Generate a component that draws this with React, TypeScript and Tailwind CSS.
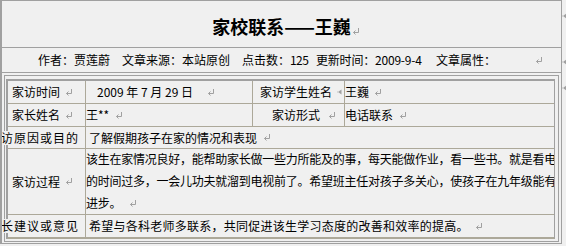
import React from 'react';

// Word-style paragraph mark
function ParaMark({ className = '' }: { className?: string }) {
  return (
    <svg width="8" height="7" viewBox="0 0 8 7" fill="none" className={`inline-block shrink-0 ${className}`}>
      <path d="M6.5 0V4.5H1.5" stroke="#a0a0a0" />
      <path d="M3.5 2.5L1.5 4.5L3.5 6.5" stroke="#a0a0a0" />
    </svg>
  );
}

// end-of-cell / end-of-row marker
function CellMark({ className = '' }: { className?: string }) {
  return (
    <svg width="5" height="6" viewBox="0 0 5 6" className={`inline-block shrink-0 ${className}`}>
      <path d="M4.5 0.5V5.5L1 3Z" fill="#a0a0a0" />
      <rect x="0" y="2.5" width="1" height="1" fill="#c0c0c0" />
    </svg>
  );
}

const cell = 'border-r border-b border-[#aca899] flex items-center whitespace-nowrap';

export default function App() {
  return (
    <div className="relative w-[566px] h-[246px] bg-[#f0f0f0] text-black font-['Noto_Sans_CJK_SC',sans-serif] text-[12px] leading-[14px]">
      <div className="w-[562px] h-[244px] border-t border-r border-b border-l-2 border-[#a0a0a0] overflow-hidden flex flex-col">
        {/* Title */}
        <div className="h-[47px] shrink-0 border-b border-[#a0a0a0] flex items-center justify-center pt-[3px]">
          <h1 className="text-[18px] leading-[22px] font-bold">
            家校联系——王巍
            <span className="relative">
              <span className="absolute left-[1px] top-[5px]"><ParaMark /></span>
            </span>
          </h1>
        </div>

        {/* Meta */}
        <div className="h-[25px] shrink-0 border-b border-[#a0a0a0] flex items-center pl-[36px] whitespace-nowrap">
          <span className="w-[84px] shrink-0">作者：贾莲蔚</span>
          <span className="w-[120px] shrink-0">文章来源：本站原创</span>
          <span className="w-[74px] shrink-0">点击数：<span className="tracking-[-0.6px]">125</span></span>
          <span className="w-[120px] shrink-0 tracking-[-0.2px]">更新时间：2009-9-4</span>
          <span className="w-[99px] shrink-0">文章属性：</span>
          <ParaMark />
        </div>

        {/* Record table */}
        <div className="flex-1 min-h-0 pt-[2px] px-[2px] pb-[1px]">
          <div className="h-full border border-[#a0a0a0] pt-[3px] pl-[1px]">
            <div className="w-[549px] border-l-2 border-t-2 border-r border-[#a0a0a0] border-b border-b-[#aca899] grid grid-cols-[78px_167px_92px_209px] grid-rows-[23px_23px_22px_66px_23px]">
              <div className={`${cell} pl-[4px]`}>
                家访时间<ParaMark className="ml-[5px]" />
              </div>
              <div className={`${cell} pl-[11px]`}>
                2009 年 7 月 29 日<ParaMark className="ml-[14px]" />
              </div>
              <div className={`${cell} justify-end pr-[2px]`}>
                家访学生姓名<CellMark className="ml-[5px]" />
              </div>
              <div className="border-b border-[#aca899] flex items-center">
                王巍<ParaMark className="ml-[5px]" />
              </div>

              <div className={`${cell} pl-[4px]`}>
                家长姓名<ParaMark className="ml-[5px]" />
              </div>
              <div className={cell}>
                王**<ParaMark className="ml-[6px]" />
              </div>
              <div className={`${cell} justify-end pr-[8px]`}>
                家访形式<ParaMark className="ml-[8px]" />
              </div>
              <div className="border-b border-[#aca899] flex items-center">
                电话联系<ParaMark className="ml-[6px]" />
              </div>

              <div className={`${cell} justify-end pr-[6px]`}>
                <span className="relative bg-[#f0f0f0] tracking-[1px]">家访原因或目的</span>
              </div>
              <div className="col-span-3 border-b border-[#aca899] flex items-center pl-[3px] whitespace-nowrap">
                了解假期孩子在家的情况和表现<ParaMark className="ml-[6px]" />
              </div>

              <div className={`${cell} pl-[4px]`}>
                家访过程<ParaMark className="ml-[5px]" />
              </div>
              <div className="col-span-3 border-b border-[#aca899] overflow-hidden whitespace-nowrap leading-[22px] -mt-px tracking-[-0.25px]">
                <p>该生在家情况良好，能帮助家长做一些力所能及的事，每天能做作业，看一些书。就是看电视</p>
                <p>的时间过多，一会儿功夫就溜到电视前了。希望班主任对孩子多关心，使孩子在九年级能有所</p>
                <p className="flex items-center">进步。<ParaMark className="ml-[8px]" /></p>
              </div>

              <div className={`${cell} justify-end pr-[6px]`}>
                <span className="relative bg-[#f0f0f0] tracking-[1px]">家长建议或意见</span>
              </div>
              <div className="col-span-3 border-b border-[#aca899] flex items-center pl-[3px] whitespace-nowrap tracking-[0.25px]">
                希望与各科老师多联系，共同促进该生学习态度的改善和效率的提高。<ParaMark className="ml-[6px]" />
              </div>
            </div>
          </div>
        </div>
      </div>

      {/* end-of-row marks in the right margin */}
      <CellMark className="absolute left-[562px] top-[13px]" />
      <CellMark className="absolute left-[562px] top-[59px]" />
      <CellMark className="absolute left-[562px] top-[85px]" />
    </div>
  );
}
